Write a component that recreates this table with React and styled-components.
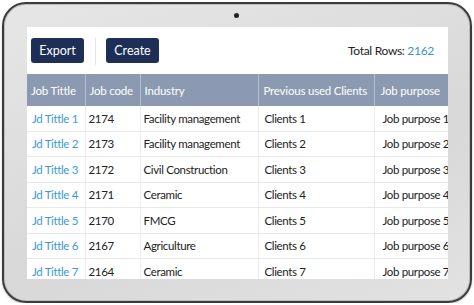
import React from 'react'
import styled, { createGlobalStyle } from 'styled-components'

const rows = [
  { title: 'Jd Tittle 1', code: '2174', industry: 'Facility management', client: 'Clients 1', purpose: 'Job purpose 1' },
  { title: 'Jd Tittle 2', code: '2173', industry: 'Facility management', client: 'Clients 2', purpose: 'Job purpose 2' },
  { title: 'Jd Tittle 3', code: '2172', industry: 'Civil Construction', client: 'Clients 3', purpose: 'Job purpose 3' },
  { title: 'Jd Tittle 4', code: '2171', industry: 'Ceramic', client: 'Clients 4', purpose: 'Job purpose 4' },
  { title: 'Jd Tittle 5', code: '2170', industry: 'FMCG', client: 'Clients 5', purpose: 'Job purpose 5' },
  { title: 'Jd Tittle 6', code: '2167', industry: 'Agriculture', client: 'Clients 6', purpose: 'Job purpose 6' },
  { title: 'Jd Tittle 7', code: '2164', industry: 'Ceramic', client: 'Clients 7', purpose: 'Job purpose 7' },
]

const App = () => {
  return (
    <>
      <GlobalStyle />
      <Tablet>
        <Camera />
        <Screen>
          <Toolbar>
            <Button>Export</Button>
            <Divider />
            <Button>Create</Button>
            <Total>Total Rows: <Count>2162</Count></Total>
          </Toolbar>
          <Table>
            <colgroup>
              <col style={{ width: 58 }} />
              <col style={{ width: 55 }} />
              <col style={{ width: 118 }} />
              <col style={{ width: 116 }} />
              <col style={{ width: 90 }} />
            </colgroup>
            <thead>
              <tr>
                <Th>Job Tittle</Th>
                <Th>Job code</Th>
                <Th>Industry</Th>
                <Th $pad={5}>Previous used Clients</Th>
                <Th $pad={6}>Job purpose</Th>
              </tr>
            </thead>
            <tbody>
              {rows.map((r) => (
                <tr key={r.code}>
                  <Td $link $pad={5}>{r.title}</Td>
                  <Td>{r.code}</Td>
                  <Td>{r.industry}</Td>
                  <Td $pad={6}>{r.client}</Td>
                  <Td $pad={8}>{r.purpose}</Td>
                </tr>
              ))}
            </tbody>
          </Table>
        </Screen>
      </Tablet>
    </>
  )
}

export default App

const GlobalStyle = createGlobalStyle`
  body {
    margin: 0;
    background: #fff;
    font-family: 'Lato', 'Open Sans', sans-serif;
  }
`
const Tablet = styled.div`
  position: relative;
  box-sizing: border-box;
  width: 470px;
  height: 301px;
  margin: 2px 0 0 2px;
  padding: 23px 22px 21px 23px;
  border: 2px solid #3b3b3b;
  border-radius: 24px;
  background: linear-gradient(160deg, #e6e6e6 0%, #d8d8d8 60%, #e2e2e2 100%);
  box-shadow: inset 0 0 0 1px #bdbdbd, 0 1px 2px rgba(0,0,0,0.25);
`
const Camera = styled.span`
  position: absolute;
  left: 230px;
  top: 9px;
  width: 5px;
  height: 5px;
  border-radius: 50%;
  background: #222;
`
const Screen = styled.div`
  width: 421px;
  height: 252px;
  background: #fff;
  overflow: hidden;
`
const Toolbar = styled.div`
  display: flex;
  align-items: center;
  height: 47px;
  padding: 0 14px 0 4px;
  box-sizing: border-box;
`
const Button = styled.div`
  width: 53px;
  height: 25px;
  border-radius: 3px;
  background: #1d2f57;
  color: #fff;
  font-size: 12.5px;
  display: flex;
  align-items: center;
  justify-content: center;
`
const Divider = styled.div`
  width: 1px;
  height: 28px;
  margin: 0 10px 0 11px;
  background: #e6e6e6;
`
const Total = styled.div`
  margin-left: auto;
  font-size: 12px;
  letter-spacing: -0.3px;
  color: #222;
`
const Count = styled.span`
  color: #3a8fd0;
`
const Table = styled.table`
  border-collapse: collapse;
  table-layout: fixed;
  width: 437px;
  font-size: 11.5px;
  letter-spacing: -0.35px;
`
const Th = styled.th`
  height: 32px;
  padding: 0 0 0 ${(p) => p.$pad ?? 4}px;
  background: #8b9ab0;
  color: #fff;
  font-weight: 400;
  font-size: 11.5px;
  letter-spacing: -0.2px;
  text-align: left;
  white-space: nowrap;
  overflow: hidden;
  border-left: 1px solid #b3bfce;
  &:first-child { border-left: none; }
`
const Td = styled.td`
  height: 24.5px;
  padding: 0 0 0 ${(p) => p.$pad ?? 3}px;
  color: ${(p) => (p.$link ? '#3a9ad9' : '#222')};
  white-space: nowrap;
  overflow: hidden;
  border-bottom: 1px solid #e8e8e8;
  border-left: 1px solid #ececec;
  &:first-child { border-left: none; }
`
